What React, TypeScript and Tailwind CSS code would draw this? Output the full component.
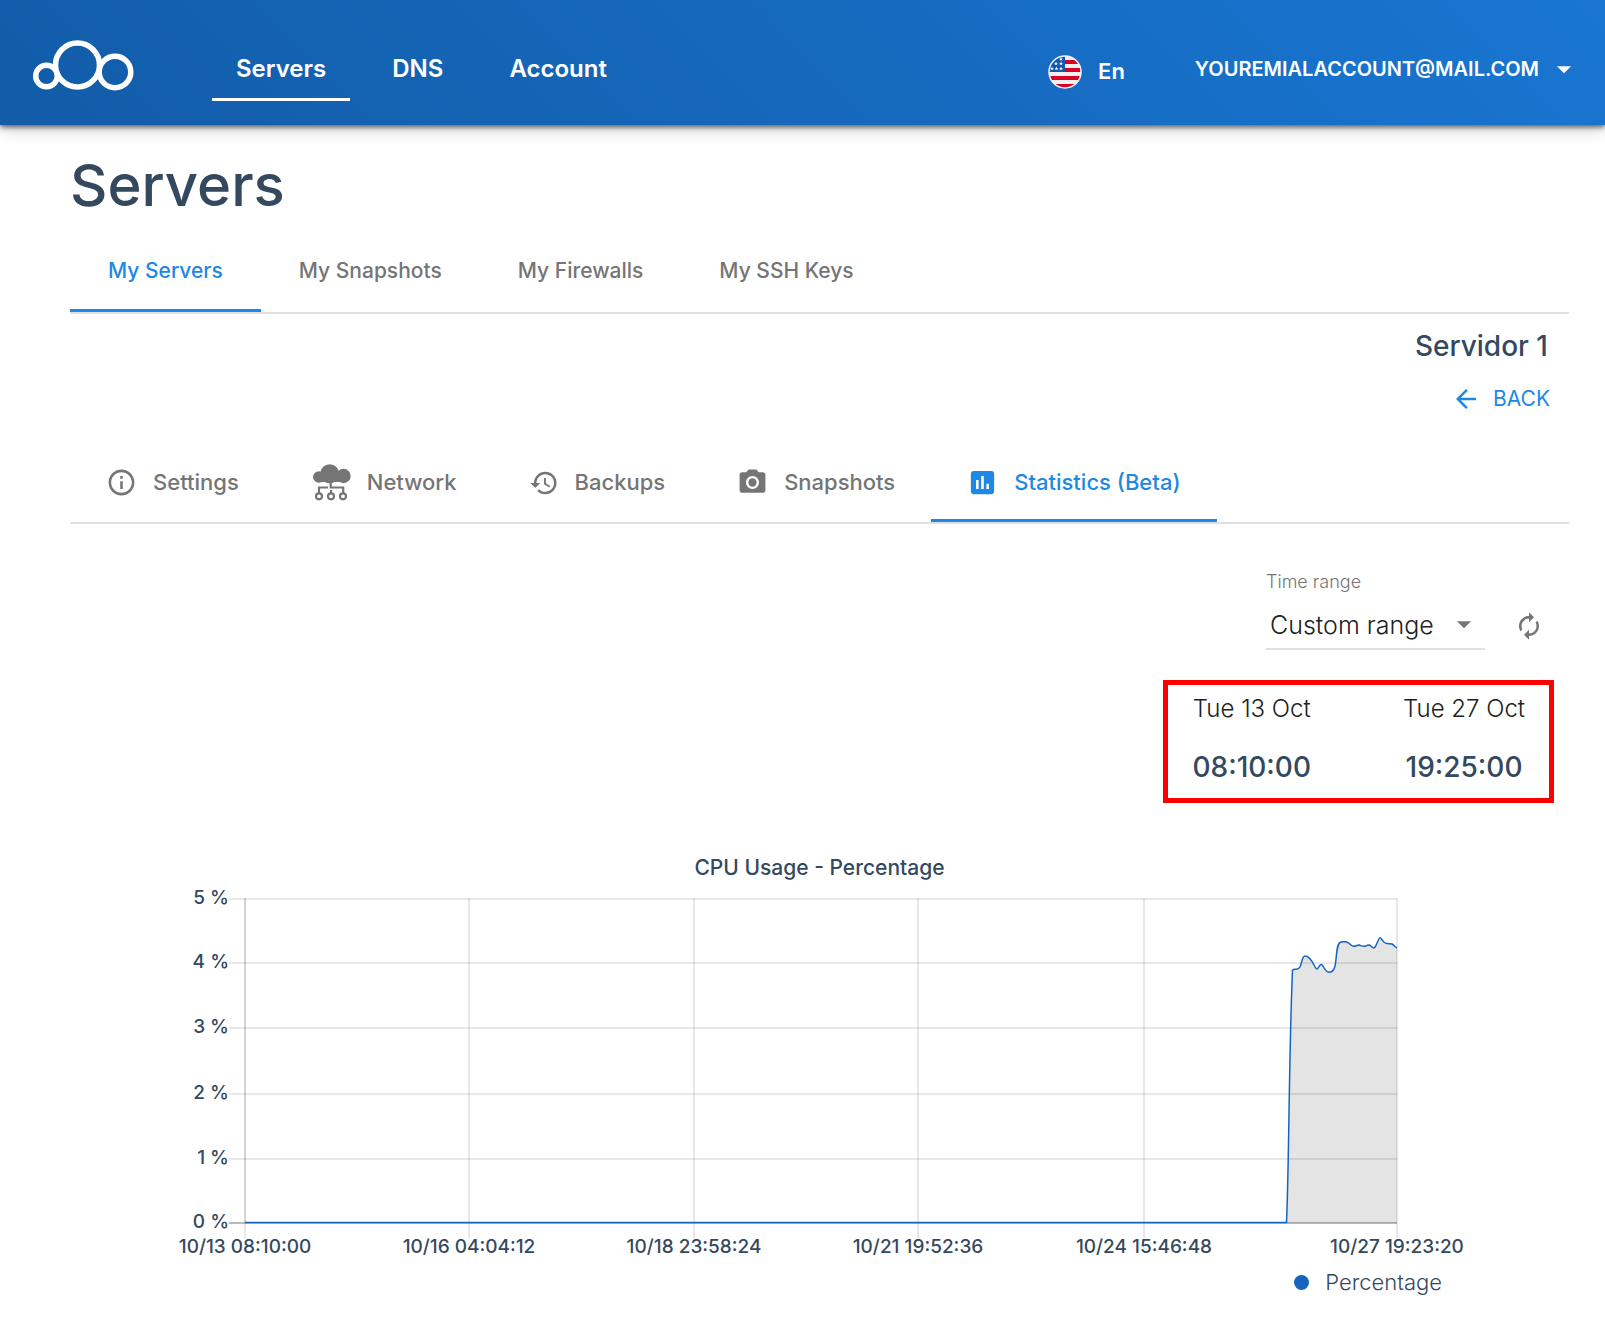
import React from "react";
import { MdOutlineInfo, MdHistory, MdCameraAlt, MdAssessment, MdArrowBack, MdArrowDropDown, MdAutorenew } from "react-icons/md";

const Logo = () => (
  <svg viewBox="0 0 102 52" className="h-[52px] w-[102px]" fill="none" stroke="#fff" strokeWidth="5.5" aria-hidden="true">
    <circle cx="45.5" cy="26" r="22" />
    <circle cx="14.5" cy="37" r="10.8" />
    <circle cx="83" cy="33" r="15.8" />
  </svg>
);

const STARS = [
  [13, 4], [8, 8.500], [13, 8.500], [4, 13.500], [8.500, 13.500], [13, 13.500],
];

const Flag = () => (
  <svg viewBox="0 0 34 34" className="size-[34px]" aria-hidden="true">
    <defs>
      <clipPath id="flag-round">
        <circle cx="17" cy="17" r="16" />
      </clipPath>
    </defs>
    <g clipPath="url(#flag-round)">
      <rect width="34" height="34" fill="#f0f0f0" />
      {[5, 13, 21, 29].map((y) => (
        <rect key={y} y={y} width="34" height="4" fill="#d80027" />
      ))}
      <rect width="17" height="17" fill="#1456b0" />
      {STARS.map(([x, y]) => (
        <path
          key={`${x}-${y}`}
          transform={`translate(${x} ${y})`}
          d="M0-2L.6-.6 2-.6 .9.3 1.300 1.700 0 .9-1.300 1.700-.9.3-2-.6-.6-.6Z"
          fill="#f0f0f0"
        />
      ))}
    </g>
    <circle cx="17" cy="17" r="16" fill="none" stroke="#f5f5f5" strokeWidth="1.5" />
  </svg>
);

const NetworkIcon = () => (
  <svg viewBox="-2 0 40 37" className="h-[37px] w-10" aria-hidden="true">
    <g fill="currentColor">
      <circle cx="16.7" cy="9.7" r="9.5" />
      <circle cx="5.8" cy="13" r="5.8" />
      <circle cx="30.5" cy="12" r="7.2" />
      <rect x="6" y="10" width="24" height="8" />
    </g>
    <g fill="none" stroke="currentColor" strokeWidth="2.2">
      <path d="M6 29v-5.500h9M17.700 18v5.500h12.500v5.500M18 26v3" />
      <circle cx="6" cy="32.300" r="3" />
      <circle cx="18" cy="32.300" r="3" />
      <circle cx="30" cy="32.300" r="3" />
    </g>
  </svg>
);

const mainNav = ["Servers", "DNS", "Account"];
const serverTabs = ["My Servers", "My Snapshots", "My Firewalls", "My SSH Keys"];
const detailTabs = [
  { label: "Settings", icon: <MdOutlineInfo size={31} /> },
  { label: "Network", icon: <NetworkIcon /> },
  { label: "Backups", icon: <MdHistory size={30} /> },
  { label: "Snapshots", icon: <MdCameraAlt size={31} /> },
  { label: "Statistics (Beta)", icon: <MdAssessment size={31} /> },
];

const ticksX = [
  { x: 175, label: "10/13 08:10:00" },
  { x: 399, label: "10/16 04:04:12" },
  { x: 624, label: "10/18 23:58:24" },
  { x: 848, label: "10/21 19:52:36" },
  { x: 1074, label: "10/24 15:46:48" },
  { x: 1327, label: "10/27 19:23:20" },
];
const ticksY = [
  { y: 20, label: "5 %" },
  { y: 84, label: "4 %" },
  { y: 149, label: "3 %" },
  { y: 215, label: "2 %" },
  { y: 280, label: "1 %" },
  { y: 344, label: "0 %" },
];

const USAGE =
  "C1219 290 1219 170 1222.500 91C1225 89 1228 92 1230 88C1232 84 1232 77 1235 77C1239 77 1242 82 1244 86C1246 90 1247 91 1248 89C1250 86 1251 84 1253 87C1255 91 1257 94 1260 93C1263 93 1264 91 1265 87C1267 78 1266 64 1271 63C1276 62 1278 63 1281 66C1284 69 1286 66 1289 66C1292 67 1293 68 1296 67C1299 65 1300 66 1302 68C1305 71 1306 66 1308 62C1310 57 1310 58 1313 62C1315 66 1320 64 1322 65C1324 66 1325 68 1327 69";

function CpuChart() {
  return (
    <svg viewBox="0 3 1499 380" className="block h-auto w-full" role="img" aria-label="CPU Usage - Percentage">
      <path d={`M1216.500 343.500${USAGE}V344H1216.500Z`} fill="#e4e4e4" />
      <g stroke="#000" strokeOpacity="0.09" strokeWidth="2">
        {ticksY.map((t) => (
          <line key={t.label} x1="159" x2="1327" y1={t.y} y2={t.y} />
        ))}
        {ticksX.map((t) => (
          <line key={t.label} x1={t.x} x2={t.x} y1="19" y2="359" />
        ))}
        <line x1="175" x2="175" y1="19" y2="344" />
        <line x1="159" x2="1327" y1="344" y2="344" strokeOpacity="0.2" />
      </g>
      <path d={`M175 343.500H1216.500${USAGE}`} fill="none" stroke="#1565c0" strokeWidth="1.5" />
      <g fill="#34495e" fontSize="19" fontWeight="500">
        {ticksY.map((t) => (
          <text key={t.label} x="159" y={t.y + 5} textAnchor="end">{t.label}</text>
        ))}
        {ticksX.map((t) => (
          <text key={t.label} x={t.x} y="374" textAnchor="middle">{t.label}</text>
        ))}
      </g>
    </svg>
  );
}

export default function App() {
  return (
    <div className="min-h-screen bg-white pb-8 font-['Inter',sans-serif] text-[#34495e]">
      <header className="flex h-[125px] items-center bg-linear-45 from-[#125ca8] to-[#1976d2] pr-6 pl-8 text-white shadow-[0_2px_5px_rgba(0,0,0,0.6),0_4px_16px_rgba(0,0,0,0.2)]">
        <a href="#" aria-label="Home" className="mt-1">
          <Logo />
        </a>
        <nav className="ml-[78px] flex gap-[18px] pt-4">
          {mainNav.map((item, i) => (
            <a
              key={item}
              href="#"
              className={`border-b-3 px-6 py-[13px] text-2xl font-semibold ${i === 0 ? "border-white" : "border-transparent"}`}
            >
              {item}
            </a>
          ))}
        </nav>
        <button className="mt-[18px] ml-auto flex items-center gap-4 text-[22px] font-semibold">
          <Flag />
          En
        </button>
        <button className="mt-3 ml-[70px] flex items-center gap-2 text-xl font-semibold">
          YOUREMIALACCOUNT@MAIL.COM
          <MdArrowDropDown size={34} />
        </button>
      </header>

      <main className="pr-9 pl-[70px]">
        <h1 className="pt-6 text-[58px] leading-[72px] font-medium">Servers</h1>

        <nav className="mt-5 flex border-b-2 border-[#e0e0e0]">
          {serverTabs.map((tab, i) => (
            <a
              key={tab}
              href="#"
              className={`border-b-3 px-[38px] pt-4 pb-6 text-[21px] leading-[28px] font-medium ${i === 0 ? "border-[#1e88e5] text-[#1e88e5]" : "border-transparent text-[#757575]"}`}
            >
              {tab}
            </a>
          ))}
        </nav>

        <div className="flex flex-col items-end pt-4 pr-[19px]">
          <h2 className="pr-0.5 text-[28px] leading-8 font-medium">Servidor 1</h2>
          <a href="#" className="mt-[21px] flex items-center gap-3 text-[21px] leading-8 text-[#1e88e5]">
            <MdArrowBack size={30} />
            BACK
          </a>
        </div>

        <nav className="mt-[31px] flex border-b-2 border-[#e0e0e0]">
          {detailTabs.map(({ label, icon }, i) => (
            <a
              key={label}
              href="#"
              className={`flex h-[76px] items-center gap-4 border-b-3 px-9 text-[22px] font-medium ${i === 4 ? "border-[#1e88e5] text-[#1e88e5]" : "border-transparent text-[#757575]"}`}
            >
              {icon}
              {label}
            </a>
          ))}
        </nav>

        <section className="flex flex-col items-end pt-[46px] pr-[15px]">
          <div className="flex items-end gap-[29px] pr-[10px]">
            <div className="w-[219px]">
              <label htmlFor="range" className="block text-lg leading-6 font-light text-[#757575]">
                Time range
              </label>
              <div className="relative mt-[9px] border-b-2 border-[#e0e0e0]">
                <select id="range" className="h-[45px] w-full appearance-none bg-transparent pl-1 text-[25px] font-light text-[#212121]">
                  <option>Custom range</option>
                </select>
                <MdArrowDropDown size={34} className="pointer-events-none absolute top-1 right-1 text-[#757575]" />
              </div>
            </div>
            <button aria-label="Refresh" className="pb-[9px] text-[#757575]">
              <MdAutorenew size={30} />
            </button>
          </div>

          <div className="mt-[30px] flex gap-[92px] border-5 border-[#ff0000] px-6 pt-2 pb-[15px]">
            {[
              ["Tue 13 Oct", "08:10:00"],
              ["Tue 27 Oct", "19:25:00"],
            ].map(([day, time]) => (
              <div key={day} className="text-center">
                <div className="text-2xl leading-8 font-light text-[#212121]">{day}</div>
                <div className="mt-[26px] text-[28px] leading-8 font-medium">{time}</div>
              </div>
            ))}
          </div>
        </section>

        <section className="mt-[51px]">
          <h3 className="text-center text-[21px] leading-7 font-medium">CPU Usage - Percentage</h3>
          <CpuChart />
          <div className="mt-2 flex items-center justify-end gap-4 pr-[127px] text-[22px] leading-6 font-light">
            <span className="size-[15px] rounded-full bg-[#1565c0]" />
            Percentage
          </div>
        </section>
      </main>
    </div>
  );
}
